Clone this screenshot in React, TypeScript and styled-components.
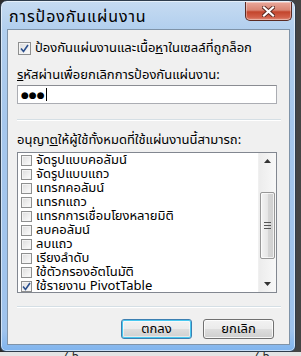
import React from "react";
import styled, { createGlobalStyle } from "styled-components";

const GlobalStyle = createGlobalStyle`
  html, body { margin: 0; padding: 0; }
  body {
    background: #3a3a3a;
    width: 301px;
    height: 356px;
    overflow: hidden;
    font-family: Tahoma, "Noto Sans Thai", "Noto Sans", "DejaVu Sans", sans-serif;
  }
`;

const Page = styled.div`
  width: 301px;
  height: 356px;
  background: linear-gradient(90deg, #2c2c2c 0px, #444 100%);
  display: flex;
  flex-direction: column;
`;

const Window = styled.div`
  box-sizing: border-box;
  flex: none;
  width: 296px;
  height: 352px;
  border: 1px solid #2f3d4c;
  border-radius: 7px 7px 6px 6px;
  background: linear-gradient(180deg, #c6dbf1 0px, #b2cfee 28px, #a6c7ec 120px, #9fc3ec 330px, #7fb4ee 100%);
  box-shadow: inset 0 0 0 1px rgba(255, 255, 255, 0.55);
  display: flex;
  flex-direction: column;
`;

const BottomStrip = styled.div`
  flex: 1;
  background: #e4e4e4;
  overflow: hidden;
  display: flex;
  font-family: "Liberation Sans", sans-serif;
  font-size: 12px;
  line-height: 12px;
  color: #222;
`;

const StripText = styled.span<{ $left: number }>`
  margin-left: ${(p) => p.$left}px;
  margin-top: -2px;
`;

const TitleBar = styled.div`
  height: 28px;
  display: flex;
  align-items: flex-start;
  justify-content: space-between;
  padding: 0 3px 0 8px;
`;

const Title = styled.span`
  font-size: 16px;
  letter-spacing: 0.9px;
  color: #000;
  line-height: 16px;
  margin-top: 8px;
`;

const CloseButton = styled.div`
  box-sizing: border-box;
  width: 47px;
  height: 19px;
  margin-top: 1px;
  border: 1px solid #5b2a22;
  border-top: none;
  border-radius: 0 0 5px 5px;
  background: linear-gradient(180deg, #e9a89b 0%, #d98573 45%, #c3452c 55%, #d2604a 85%, #e0907c 100%);
  box-shadow: inset 0 0 0 1px rgba(255, 255, 255, 0.35);
  display: flex;
  align-items: center;
  justify-content: center;
`;

const Client = styled.div`
  flex: 1;
  margin: 0 5px 6px 6px;
  border: 1px solid #7f93a8;
  background: #f0f0f0;
  display: flex;
  flex-direction: column;
  padding: 0 15px 0 9px;
  font-size: 13px;
  color: #000;
`;

const CheckRow = styled.label`
  display: flex;
  align-items: center;
  gap: 4px;
  height: 13px;
  margin-top: 12px;
  padding-left: 1px;
  line-height: 13px;
  white-space: nowrap;
`;

const Box = styled.span<{ $size?: number }>`
  box-sizing: border-box;
  flex: none;
  width: ${(p) => p.$size ?? 13}px;
  height: ${(p) => p.$size ?? 13}px;
  border: 1px solid #8e8f8f;
  background: linear-gradient(135deg, #dcdcdc 0%, #f0f0f0 60%, #fdfdfd 100%);
  box-shadow: inset 0 0 0 1px #f4f4f4;
  display: flex;
  align-items: center;
  justify-content: center;
`;

const FieldLabel = styled.div<{ $top: number }>`
  margin-top: ${(p) => p.$top}px;
  height: 14px;
  line-height: 14px;
  white-space: nowrap;
`;

const PasswordInput = styled.div`
  box-sizing: border-box;
  margin-top: 3px;
  width: 260px;
  height: 19px;
  border: 1px solid #abadb3;
  border-top-color: #8a8c92;
  background: #fff;
  display: flex;
  align-items: center;
  padding-left: 3px;
`;

const Dots = styled.span`
  font-size: 9px;
  font-family: "DejaVu Sans", sans-serif;
  line-height: 12px;
`;

const Caret = styled.span`
  width: 1px;
  height: 13px;
  background: #000;
  margin-left: 1px;
`;

const Separator = styled.div<{ $top: number }>`
  margin-top: ${(p) => p.$top}px;
  height: 1px;
  margin-right: -7px;
  background: #d5dfe5;
  border-bottom: 1px solid #fff;
`;

const ListBox = styled.div`
  box-sizing: border-box;
  margin-top: 5px;
  width: 260px;
  height: 141px;
  border: 1px solid #828790;
  background: #fff;
  display: flex;
`;

const Items = styled.div`
  flex: 1;
  display: flex;
  flex-direction: column;
  padding-left: 3px;
`;

const Item = styled.div`
  height: 14px;
  flex: none;
  display: flex;
  align-items: center;
  gap: 4px;
  white-space: nowrap;
  line-height: 14px;
`;

const ScrollBar = styled.div`
  width: 17px;
  background: linear-gradient(90deg, #ececec, #f8f8f8);
  border-left: 1px solid #f0f0f0;
  display: flex;
  flex-direction: column;
  align-items: center;
`;

const Arrow = styled.div`
  height: 16px;
  display: flex;
  align-items: center;
  justify-content: center;
`;

const Thumb = styled.div`
  box-sizing: border-box;
  margin-top: 23px;
  width: 15px;
  height: 67px;
  border: 1px solid #979797;
  border-radius: 2px;
  background: linear-gradient(90deg, #f3f3f3 0%, #e6e6e6 50%, #d6d6d6 51%, #cfcfcf 100%);
  box-shadow: inset 0 0 0 1px rgba(255, 255, 255, 0.7);
  display: flex;
  align-items: center;
  justify-content: center;
`;

const Spacer = styled.div`
  flex: 1;
`;

const ButtonRow = styled.div`
  margin-top: 11px;
  display: flex;
  justify-content: flex-end;
  gap: 11px;
`;

const Button = styled.div<{ $default?: boolean }>`
  box-sizing: border-box;
  width: 71px;
  height: 20px;
  border: 1px solid ${(p) => (p.$default ? "#3c7fb1" : "#707070")};
  border-radius: 3px;
  background: linear-gradient(180deg, #f2f2f2 0%, #ebebeb 48%, #dddddd 52%, #cfcfcf 100%);
  box-shadow: ${(p) =>
    p.$default
      ? "inset 0 0 0 1px #48c8f0, inset 0 0 0 2px rgba(255,255,255,0.5)"
      : "inset 0 0 0 1px rgba(255,255,255,0.8)"};
  display: flex;
  align-items: center;
  justify-content: center;
  font-size: 13px;
  line-height: 14px;
`;

const Check = () => (
  <svg width="9" height="9" viewBox="0 0 9 9">
    <path d="M1 4.5 L3.5 7.5 L8 1" fill="none" stroke="#2b4f8c" strokeWidth="1.6" />
  </svg>
);

const items = [
  "จัดรูปแบบคอลัมน์",
  "จัดรูปแบบแถว",
  "แทรกคอลัมน์",
  "แทรกแถว",
  "แทรกการเชื่อมโยงหลายมิติ",
  "ลบคอลัมน์",
  "ลบแถว",
  "เรียงลำดับ",
  "ใช้ตัวกรองอัตโนมัติ",
  "ใช้รายงาน PivotTable",
];

export default function App() {
  return (
    <>
      <GlobalStyle />
      <Page>
        <Window>
          <TitleBar>
            <Title>การป้องกันแผ่นงาน</Title>
            <CloseButton>
              <svg width="13" height="11" viewBox="0 0 13 11">
                <path d="M2 1.5 L11 9.5 M11 1.5 L2 9.5" stroke="#5a2a22" strokeWidth="4" strokeLinecap="square" />
                <path d="M2 1.5 L11 9.5 M11 1.5 L2 9.5" stroke="#fff" strokeWidth="2.2" strokeLinecap="square" />
              </svg>
            </CloseButton>
          </TitleBar>
          <Client>
            <CheckRow>
              <Box>
                <Check />
              </Box>
              <span>
                ป้องกันแผ่นงานและเนื้อ<u>ห</u>าในเซลล์ที่ถูกล็อก
              </span>
            </CheckRow>
            <FieldLabel $top={13}>
              <u>ร</u>หัสผ่านเพื่อยกเลิกการป้องกันแผ่นงาน:
            </FieldLabel>
            <PasswordInput>
              <Dots>●●●</Dots>
              <Caret />
            </PasswordInput>
            <Separator $top={15} />
            <FieldLabel $top={12}>
              อนุญา<u>ต</u>ให้ผู้ใช้ทั้งหมดที่ใช้แผ่นงานนี้สามารถ:
            </FieldLabel>
            <ListBox>
              <Items>
                {items.map((t, i) => (
                  <Item key={t}>
                    <Box $size={11}>{i === items.length - 1 ? <Check /> : null}</Box>
                    <span>{t}</span>
                  </Item>
                ))}
              </Items>
              <ScrollBar>
                <Arrow>
                  <svg width="7" height="4" viewBox="0 0 7 4">
                    <path d="M0 4 L3.5 0 L7 4 Z" fill="#333" />
                  </svg>
                </Arrow>
                <Thumb>
                  <svg width="7" height="7" viewBox="0 0 7 7">
                    <path d="M0 0.5 H7 M0 3.5 H7 M0 6.5 H7" stroke="#555" strokeWidth="1" />
                  </svg>
                </Thumb>
                <Spacer />
                <Arrow>
                  <svg width="7" height="4" viewBox="0 0 7 4">
                    <path d="M0 0 L3.5 4 L7 0 Z" fill="#333" />
                  </svg>
                </Arrow>
              </ScrollBar>
            </ListBox>
            <Separator $top={13} />
            <ButtonRow>
              <Button $default>ตกลง</Button>
              <Button>ยกเลิก</Button>
            </ButtonRow>
          </Client>
        </Window>
        <BottomStrip>
          <StripText $left={62}>7.5</StripText>
          <StripText $left={174}>7.5</StripText>
        </BottomStrip>
      </Page>
    </>
  );
}
